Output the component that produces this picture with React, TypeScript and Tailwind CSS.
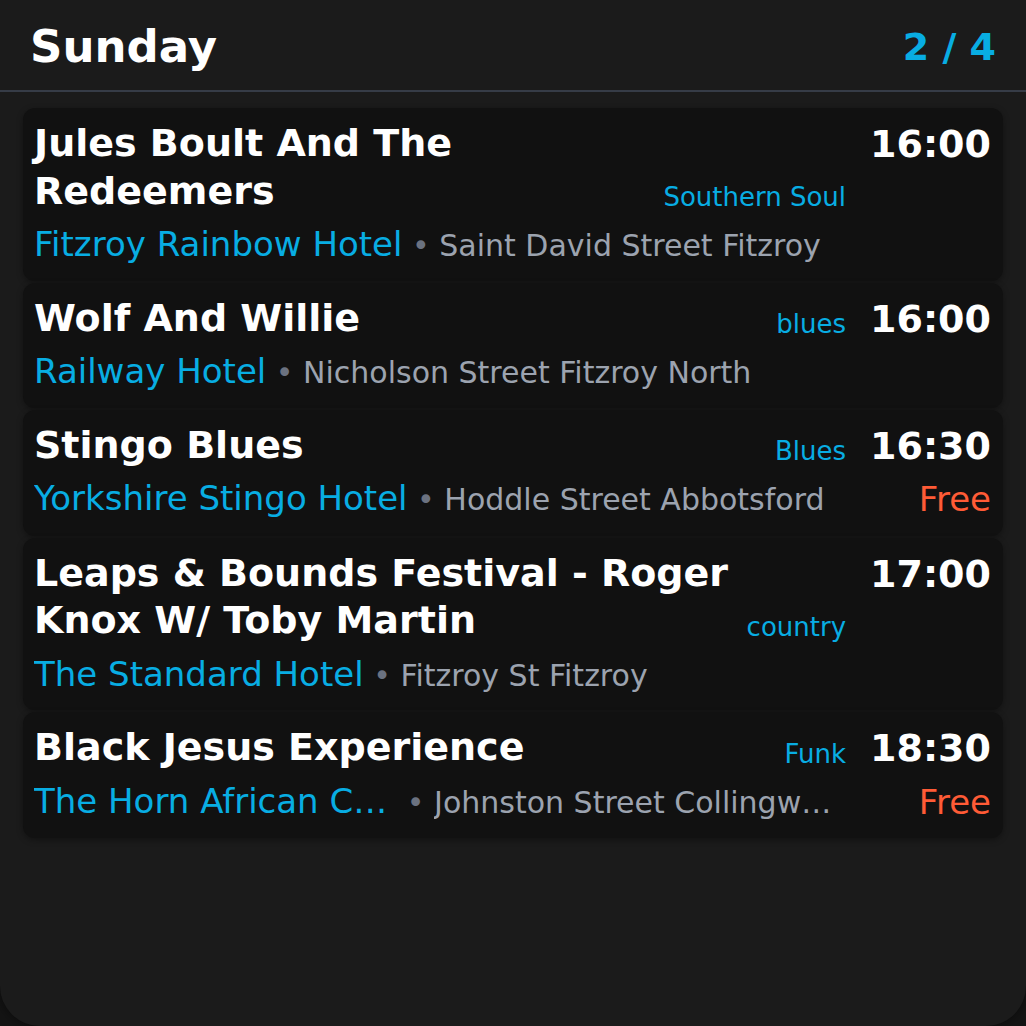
import React from "react";

type Gig = {
    title: string;
    genre: string;
    venue: string;
    address: string;
    time: string;
    free?: boolean;
};

const gigs: Gig[] = [
    {
        title: "Jules Boult And The Redeemers",
        genre: "Southern Soul",
        venue: "Fitzroy Rainbow Hotel",
        address: "Saint David Street Fitzroy",
        time: "16:00",
    },
    {
        title: "Wolf And Willie",
        genre: "blues",
        venue: "Railway Hotel",
        address: "Nicholson Street Fitzroy North",
        time: "16:00",
    },
    {
        title: "Stingo Blues",
        genre: "Blues",
        venue: "Yorkshire Stingo Hotel",
        address: "Hoddle Street Abbotsford",
        time: "16:30",
        free: true,
    },
    {
        title: "Leaps & Bounds Festival - Roger Knox W/ Toby Martin",
        genre: "country",
        venue: "The Standard Hotel",
        address: "Fitzroy St Fitzroy",
        time: "17:00",
    },
    {
        title: "Black Jesus Experience",
        genre: "Funk",
        venue: "The Horn African Cafe",
        address: "Johnston Street Collingwood",
        time: "18:30",
        free: true,
    },
];

const GigCard = ({ gig }: { gig: Gig }) => {
    return (
        <div className="flex gap-6 rounded-xl bg-[#111111] pl-[11px] pr-[12px] pt-[12px] pb-[15px] shadow-[0_2px_6px_rgba(0,0,0,0.35)]">
            <div className="flex min-w-0 flex-1 flex-col">
                <div className="flex items-end gap-4">
                    <h3 className="min-w-0 flex-1 text-[38px] font-bold leading-[1.25] text-white">
                        {gig.title}
                    </h3>
                    <span className="mb-[3px] shrink-0 text-[26px] leading-[normal] text-[#08ade3]">
                        {gig.genre}
                    </span>
                </div>
                <div className="mt-[8px] flex min-w-0 items-baseline leading-[1.25]">
                    <span className="min-w-0 truncate text-[34px] text-[#08ade3]">
                        {gig.venue}
                    </span>
                    <span className="shrink-0 whitespace-pre text-[30px] text-[#6b7280]">
                        {" • "}
                    </span>
                    <span className="min-w-0 truncate text-[30px] text-[#9ca3af]">
                        {gig.address}
                    </span>
                </div>
            </div>
            <div className="flex shrink-0 flex-col items-end pt-[1px]">
                <span className="text-[38px] font-bold leading-[1.25] text-white">
                    {gig.time}
                </span>
                {gig.free && (
                    <span className="mt-[8px] text-[34px] leading-[1.25] text-[#ff5b36]">
                        Free
                    </span>
                )}
            </div>
        </div>
    );
};

export default function App() {
    return (
        <main
            className="min-h-[1026px] bg-[#141414]"
            style={{ fontFamily: '"DejaVu Sans", "Noto Sans", sans-serif' }}
        >
            <div className="h-[1026px] overflow-hidden rounded-b-[40px] bg-[#1b1b1b] shadow-[0_0_12px_rgba(0,0,0,0.5)]">
                <header className="flex items-center justify-between border-b-2 border-[#363c47] px-[30px] pt-[20px] pb-[17px]">
                    <h1 className="text-[45px] font-bold leading-[normal] text-white">
                        Sunday
                    </h1>
                    <span className="text-[38px] font-bold leading-[normal] text-[#08ade3]">
                        2 / 4
                    </span>
                </header>
                <section className="flex flex-col gap-[2px] px-[23px] pt-4">
                    {gigs.map((gig) => (
                        <GigCard key={gig.title} gig={gig} />
                    ))}
                </section>
            </div>
        </main>
    );
}
